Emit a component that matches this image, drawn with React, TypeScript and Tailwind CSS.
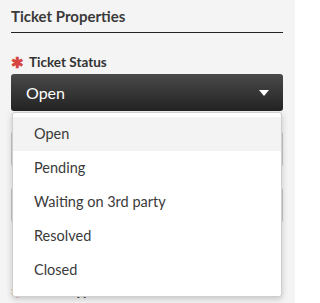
const options = ["Open", "Pending", "Waiting on 3rd party", "Resolved", "Closed"]

const font = { fontFamily: "Lato, 'Noto Sans', sans-serif" }

function Caret() {
  return (
    <svg width="10" height="6" viewBox="0 0 10 6" className="fill-white">
      <path d="M0 0h10L5 6z" />
    </svg>
  )
}

export default function App() {
  return (
    <div className="w-[295px] h-[303px] overflow-hidden bg-[#f4f4f4] text-[#333]" style={font}>
      <div className="pl-[11px] pr-[12px] pt-[8px]">
        {/* Section heading */}
        <div className="border-b border-[#222] pb-[7px]">
          <h2 className="text-[15px] font-bold leading-[17px] text-[#3a3a3a]">Ticket Properties</h2>
        </div>

        <div className="relative mt-[21px]">
          {/* Ticket Status field */}
          <label className="flex items-center gap-[5px] text-[13.5px] font-bold leading-[16px] text-[#333]">
            <span className="text-[#d64541] text-[15px] leading-none">✱</span>
            Ticket Status
          </label>
          <div className="mt-[4px] h-[37px] rounded-[3px] bg-gradient-to-b from-[#4a4a4a] to-[#232323] flex items-center justify-between pl-[15px] pr-[14px]">
            <span className="text-white text-[16px]">Open</span>
            <Caret />
          </div>

          {/* fields underneath the open menu */}
          <div className="mt-[20px] h-[36px] rounded-[3px] border border-[#c8c8c8] bg-white" />
          <div className="mt-[20px] h-[36px] rounded-[3px] border border-[#c8c8c8] bg-white" />
          <div className="mt-[60px] flex items-center gap-[5px] text-[13.5px] font-bold leading-[16px]">
            <span className="text-[#d64541] text-[15px] leading-none">✱</span>
            Ticket Type
          </div>

          {/* open menu */}
          <ul className="absolute left-[1px] right-[1px] top-[58px] rounded-[3px] border border-[#cfcfcf] bg-white pt-[4px] pb-[9px] shadow-[0_2px_6px_rgba(0,0,0,0.2)]">
            {options.map((o, i) => (
              <li
                key={o}
                className={`h-[34px] flex items-center pl-[21px] text-[14.5px] text-[#3a3a3a] ${i === 0 ? "bg-[#f3f3f3]" : ""}`}
              >
                {o}
              </li>
            ))}
          </ul>
        </div>
      </div>
    </div>
  )
}
